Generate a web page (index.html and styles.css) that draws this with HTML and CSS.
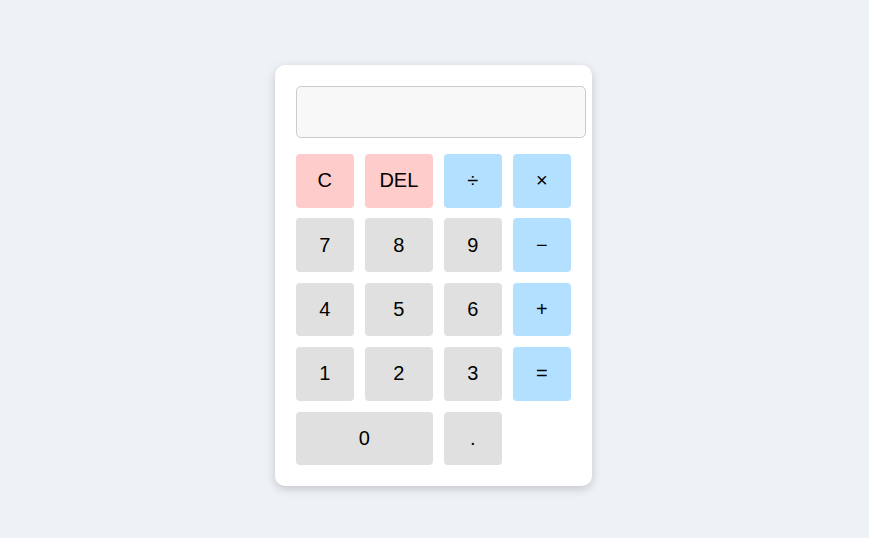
FILE: index.html
```html
<!DOCTYPE html>
<html lang="en">
<head>
<meta charset="utf-8">
<title>Calculator</title>
<link rel="stylesheet" href="styles.css">
</head>
<body>
<div class="calculator">
  <input class="display" type="text" readonly>
  <div class="keys">
    <button class="key clear">C</button>
    <button class="key clear">DEL</button>
    <button class="key op">÷</button>
    <button class="key op">×</button>
    <button class="key">7</button>
    <button class="key">8</button>
    <button class="key">9</button>
    <button class="key op">−</button>
    <button class="key">4</button>
    <button class="key">5</button>
    <button class="key">6</button>
    <button class="key op">+</button>
    <button class="key">1</button>
    <button class="key">2</button>
    <button class="key">3</button>
    <button class="key op">=</button>
    <button class="key zero">0</button>
    <button class="key">.</button>
  </div>
</div>
</body>
</html>
```
FILE: styles.css
```css
html, body {
  margin: 0;
  padding: 0;
}
body {
  background: #eef1f6;
  font-family: "Liberation Sans", Arial, sans-serif;
  min-height: 538px;
  display: flex;
  justify-content: center;
  align-items: flex-start;
}
.calculator {
  margin-top: 65px;
  margin-right: 2px;
  width: 275px;
  background: #ffffff;
  border-radius: 10px;
  padding: 21px;
  box-shadow: 0 3px 10px rgba(0, 0, 0, 0.18);
  display: flex;
  flex-direction: column;
  align-items: flex-start;
  gap: 16px;
}
.display {
  box-sizing: border-box;
  width: 289.7px;
  flex: none;
  height: 52px;
  margin: 0;
  padding: 8px;
  font-family: inherit;
  font-size: 24px;
  text-align: right;
  background: #f8f8f8;
  border: 1px solid #cccccc;
  border-radius: 5px;
  outline: none;
}
.keys {
  display: grid;
  grid-template-columns: 57.7px 67.7px 57.7px 57.7px;
  grid-auto-rows: 53.5px;
  column-gap: 11.3px;
  row-gap: 10.9px;
}
.key {
  border: none;
  border-radius: 4px;
  background: #e0e0e0;
  color: #000;
  font-family: inherit;
  font-size: 20px;
  padding: 0;
  margin: 0;
  cursor: pointer;
}
.key.clear {
  background: #ffcccc;
}
.key.op {
  background: #b3e0ff;
}
.key.zero {
  grid-column: span 2;
}
```
